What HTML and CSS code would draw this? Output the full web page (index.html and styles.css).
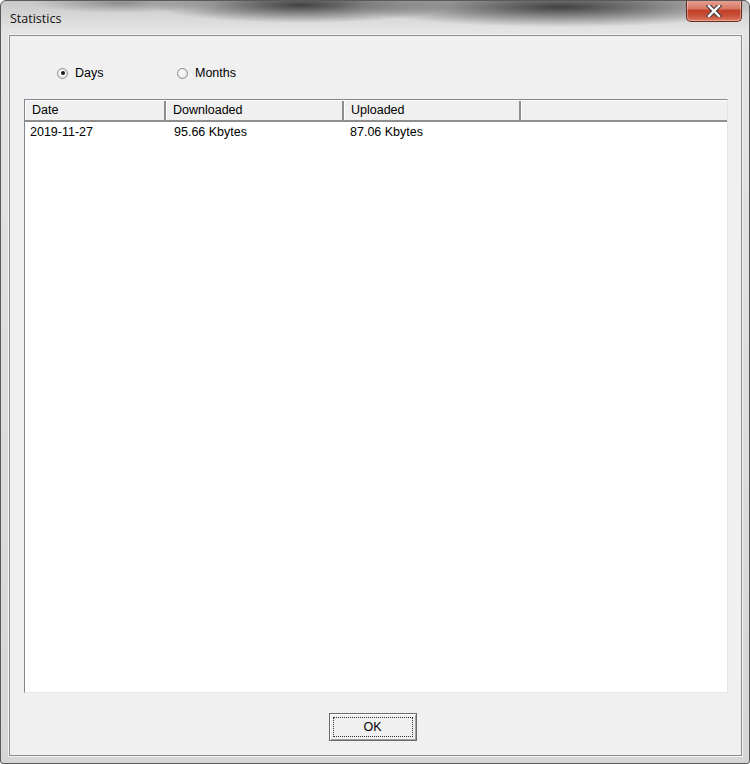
FILE: index.html
```html
<!DOCTYPE html>
<html lang="en">
<head>
    <meta charset="UTF-8">
    <title>Statistics</title>
    <link rel="stylesheet" href="styles.css">
</head>
<body>
    <div class="window">
        <div class="titlebar">
            <span class="title">Statistics</span>
            <button class="close-button" title="Close">
                <svg width="18" height="12" viewBox="0 0 18 12">
                    <path d="M4 1 L14 11 M14 1 L4 11" stroke="#3a3a3a" stroke-width="4.4" stroke-linecap="square"/>
                    <path d="M4 1 L14 11 M14 1 L4 11" stroke="#ffffff" stroke-width="2.4" stroke-linecap="square"/>
                </svg>
            </button>
        </div>
        <div class="client">
            <div class="period">
                <label class="radio"><span class="radio-dot checked"></span>Days</label>
                <label class="radio"><span class="radio-dot"></span>Months</label>
            </div>
            <div class="listview">
                <div class="lv-header">
                    <div class="lv-col col-date">Date</div>
                    <div class="lv-col col-down">Downloaded</div>
                    <div class="lv-col col-up">Uploaded</div>
                    <div class="lv-col col-rest"></div>
                </div>
                <div class="lv-row">
                    <div class="lv-cell col-date">2019-11-27</div>
                    <div class="lv-cell col-down">95.66 Kbytes</div>
                    <div class="lv-cell col-up">87.06 Kbytes</div>
                </div>
            </div>
            <div class="buttons">
                <button class="ok-button"><span class="focus">OK</span></button>
            </div>
        </div>
    </div>
</body>
</html>
```

FILE: styles.css
```css
body {
    margin: 0;
    font-family: 'Liberation Sans', Arial, sans-serif;
    font-size: 12.5px;
    color: #000;
    background: #fff;
}
.window {
    width: 750px;
    height: 764px;
    box-sizing: border-box;
    border: 1px solid #5a5a5a;
    border-radius: 6px 6px 3px 3px;
    display: flex;
    flex-direction: column;
    background:
        radial-gradient(ellipse 150px 18px at 300px 4px, rgba(30, 30, 30, 0.8), rgba(30, 30, 30, 0) 100%),
        radial-gradient(ellipse 200px 20px at 560px 6px, rgba(40, 40, 40, 0.85), rgba(40, 40, 40, 0) 100%),
        radial-gradient(ellipse 90px 10px at 120px 2px, rgba(80, 80, 80, 0.5), rgba(80, 80, 80, 0) 100%),
        linear-gradient(to bottom, #c9c9c9 0px, #e4e4e4 30px, #d6d6d6 100%);
    overflow: hidden;
}
.titlebar {
    height: 34px;
    display: flex;
    justify-content: space-between;
    align-items: flex-start;
    flex-shrink: 0;
}
.title {
    font-family: 'Open Sans', 'Liberation Sans', sans-serif;
    font-size: 12.5px;
    color: #111;
    margin: 9px 0 0 9px;
}
.close-button {
    width: 56px;
    height: 22px;
    margin: -1px 7px 0 0;
    padding: 0;
    border: 1px solid #6b2a20;
    border-top: none;
    border-radius: 0 0 5px 5px;
    background: linear-gradient(to bottom, #e8a395 0%, #d77a66 40%, #c3402b 50%, #c8503a 75%, #e07a5e 100%);
    display: flex;
    align-items: center;
    justify-content: center;
    box-shadow: inset 0 0 0 1px rgba(255, 255, 255, 0.35);
}
.client {
    flex: 1;
    margin: 0 7px 7px 8px;
    border: 1px solid #8c8c8c;
    box-shadow: 0 0 0 1px #f4f4f4;
    background: #f0f0f0;
    display: flex;
    flex-direction: column;
    padding: 0 13px 0 14px;
}
.period {
    display: flex;
    height: 63px;
    align-items: center;
    padding-left: 33px;
    padding-top: 11px;
    box-sizing: border-box;
}
.radio {
    display: flex;
    align-items: center;
    gap: 7px;
    width: 120px;
}
.radio-dot {
    width: 11px;
    height: 11px;
    box-sizing: border-box;
    border-radius: 50%;
    border: 1px solid #8b8b8b;
    background: radial-gradient(circle at 40% 40%, #ffffff, #dcdcdc);
    display: flex;
    align-items: center;
    justify-content: center;
}
.radio-dot.checked::after {
    content: "";
    width: 4px;
    height: 4px;
    border-radius: 50%;
    background: #1a1a1a;
}
.listview {
    height: 592px;
    border: 1px solid #828790;
    border-right-color: #e4e4e4;
    border-bottom-color: #e4e4e4;
    background: #fff;
}
.lv-header {
    display: flex;
    height: 19px;
    background: #f0f0f0;
    border-top: 1px solid #fff;
    border-bottom: 2px solid #8e8e8e;
}
.lv-col {
    box-sizing: border-box;
    padding: 2px 0 0 6px;
    border-right: 2px solid #8e8e8e;
    border-left: 1px solid #fff;
}
.col-date {
    width: 141px;
}
.col-down {
    width: 178px;
}
.col-up {
    width: 177px;
}
.col-rest {
    flex: 1;
    border-right: none;
}
.lv-row {
    display: flex;
    height: 19px;
    align-items: center;
}
.lv-cell {
    box-sizing: border-box;
    padding-left: 5px;
}
.lv-cell.col-date {
    width: 142px;
}
.lv-cell.col-down {
    padding-left: 7px;
}
.buttons {
    flex: 1;
    display: flex;
    justify-content: center;
    align-items: center;
    padding-right: 7px;
}
.ok-button {
    width: 88px;
    height: 28px;
    padding: 3px;
    border: 1px solid #6a6a6a;
    box-shadow: inset 1px 1px 0 #fff, inset -1px -1px 0 #a0a0a0;
    background: #f0f0f0;
    font-family: 'Liberation Sans', Arial, sans-serif;
    font-size: 12.5px;
    color: #000;
    display: flex;
    margin-top: 5px;
}
.focus {
    flex: 1;
    border: 1px dotted #333;
    display: flex;
    align-items: center;
    justify-content: center;
}
```
